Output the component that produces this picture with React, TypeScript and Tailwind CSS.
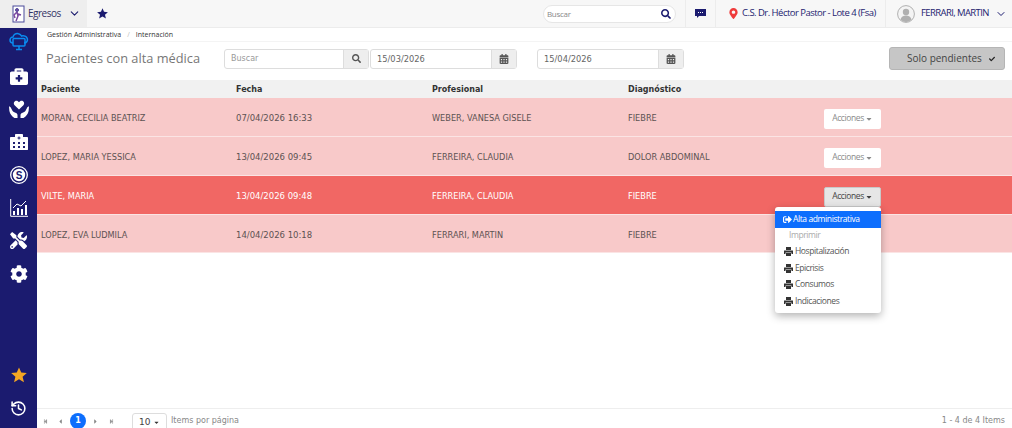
import React from "react";
import { ChevronDown, History } from "lucide-react";
import { FaCog, FaTools, FaBriefcaseMedical, FaHospitalAlt, FaCalendarAlt, FaSearch, FaMapMarkerAlt, FaCheck, FaSignOutAlt, FaCaretDown, FaStepBackward, FaStepForward, FaCaretLeft, FaCaretRight } from "react-icons/fa";

const navy = "#1b1b6f";
const rows = [
  ["MORAN, CECILIA BEATRIZ", "07/04/2026 16:33", "WEBER, VANESA GISELE", "FIEBRE"],
  ["LOPEZ, MARIA YESSICA", "13/04/2026 09:45", "FERREIRA, CLAUDIA", "DOLOR ABDOMINAL"],
  ["VILTE, MARIA", "13/04/2026 09:48", "FERREIRA, CLAUDIA", "FIEBRE"],
  ["LOPEZ, EVA LUDMILA", "14/04/2026 10:18", "FERRARI, MARTIN", "FIEBRE"],
];
const rowH = ["h-[39px]", "h-[39px]", "h-[39px]", "h-[38px]"];

function SharpStar({ size, color }: { size: number; color: string }) {
  return (
    <svg width={size} height={size} viewBox="0 0 20 20" fill={color}>
      <polygon points="10,0.500 12.800,7 19.800,7.500 14.500,12.100 16.200,19 10,15.300 3.800,19 5.500,12.100 0.200,7.500 7.200,7" />
    </svg>
  );
}
function PrinterSolid() {
  return (
    <svg width="9" height="9" viewBox="0 0 9 9" fill="#333333">
      <path d="M2 0h5v3H2z" />
      <path d="M0 3.500h9V7H7.500V5.500h-6V7H0z" />
      <path d="M2 6h5v3H2z" />
    </svg>
  );
}
function HandsHeart() {
  return (
    <svg width="20" height="18" viewBox="0 0 20 18" fill="#fff">
      <path d="M10 9.500 5.600 5.200C4 3.400 5.200.8 7.400.8c1.100 0 2 .6 2.600 1.500C10.600 1.400 11.500.8 12.600.8c2.200 0 3.400 2.600 1.800 4.400z" />
      <path d="M0 6.500c1 0 1.600.6 2 1.400l1.600 3c.9 1 2.500 1.500 3.600 2.200.8.5 1.300 1.200 1.300 2.200V18H5.500C3 16.500 1 14 .4 11z" />
      <path d="M20 6.500c-1 0-1.600.6-2 1.400l-1.600 3c-.9 1-2.500 1.500-3.600 2.200-.8.5-1.300 1.200-1.300 2.200V18h3c2.500-1.500 4.500-4 5.100-7z" />
    </svg>
  );
}
function Coin() {
  return (
    <svg width="18" height="18" viewBox="0 0 18 18">
      <circle cx="9" cy="9" r="8.300" fill="none" stroke="#fff" strokeWidth="1.300" />
      <circle cx="9" cy="9" r="6.200" fill="#fff" />
      <text x="9" y="12.600" textAnchor="middle" fontSize="10" fontWeight="700" fill={navy} fontFamily="'Liberation Sans',sans-serif">S</text>
    </svg>
  );
}
function Chart() {
  return (
    <svg width="18" height="18" viewBox="0 0 18 18" fill="none">
      <path d="M.7 0v17.300H18" stroke="#fff" strokeWidth="1" />
      <path d="M3 16v-4h2v4zM7 16V9h2v7zM11 16v-6h2v6zM15 16V6h2v10z" fill="#fff" />
      <path d="M3 9l4-4 4 2 5-5" stroke="#fff" strokeWidth="1" />
    </svg>
  );
}
function CloudMonitor() {
  return (
    <svg width="20" height="19" viewBox="0 0 20 19" fill="none" stroke="#0a8bf0" strokeWidth="1.500">
      <path d="M3 11H4C2 11 1 9.500 1 8s1.300-3 3-3c.4-2.500 3-4 5.500-3.200C11 2.200 12 3 12.500 4c2.500-.8 5 .5 5.800 2.500.6 2-.5 4.500-3.300 4.500" />
      <rect x="4" y="6.500" width="12" height="7.500" rx="1" />
      <path d="M10 14v3M7 17.500h6" />
    </svg>
  );
}
function Avatar() {
  return (
    <svg width="18" height="18" viewBox="0 0 18 18">
      <circle cx="9" cy="9" r="8.400" fill="#f4f4f4" stroke="#b0b0b0" strokeWidth="1" />
      <circle cx="9" cy="7" r="3.200" fill="#b0b0b0" />
      <path d="M3.500 14.500c.6-2.800 2.800-4 5.500-4s4.900 1.200 5.500 4c-1.400 1.500-3.300 2.500-5.500 2.500s-4.100-1-5.500-2.500z" fill="#b0b0b0" />
    </svg>
  );
}
function Sidebar() {
  const cls = "flex items-center justify-center";
  return (
    <aside className="w-[37px] shrink-0 flex flex-col items-center bg-[#1b1b6f]">
      <div className={`${cls} h-[19px] mt-[4px]`}><CloudMonitor /></div>
      <div className={`${cls} h-[19px] mt-[15px]`}><FaBriefcaseMedical size={18} color="#fff" /></div>
      <div className={`${cls} h-[18px] mt-[15px]`}><HandsHeart /></div>
      <div className={`${cls} h-[18px] mt-[15px]`}><FaHospitalAlt size={18} color="#fff" /></div>
      <div className={`${cls} h-[18px] mt-[15px]`}><Coin /></div>
      <div className={`${cls} h-[18px] mt-[15px]`}><Chart /></div>
      <div className={`${cls} h-[18px] mt-[14px]`}><FaTools size={17} color="#fff" /></div>
      <div className={`${cls} h-[18px] mt-[16px]`}><FaCog size={18} color="#fff" /></div>
      <div className="flex-1" />
      <div className={`${cls} h-[16px]`}><SharpStar size={16} color="#f5a623" /></div>
      <div className={`${cls} h-[16px] mt-[17px] mb-[12px]`}><History size={17} color="#fff" strokeWidth={2.2} /></div>
    </aside>
  );
}
function TopBar() {
  return (
    <header className="h-[28px] shrink-0 flex bg-[#f7f7f7] border-b border-[#ececec] font-['Open_Sans',sans-serif] text-[#23236f]">
      <div className="w-[87px] bg-[#eeeeee] flex items-center pl-[10px]">
        <svg width="15" height="18" viewBox="0 0 15 18" fill="none" stroke="#4a4a9a" strokeWidth="1"><rect x="3" y="1" width="11" height="16" fill="#fff" /><circle cx="7" cy="5" r="1.500" fill="#7a4aa0" /><path d="M7 7l-3 3 1 3M7 7l1 4-2 5M8 9l3 1" stroke="#7a4aa0" strokeWidth="1.500" /></svg>
        <span className="ml-[3px] text-[10px] tracking-[-0.5px] text-[#333366]">Egresos</span>
        <ChevronDown size={13} className="ml-[7px]" color="#1b1b6f" />
      </div>
      <div className="pl-[10px] flex items-center"><SharpStar size={11} color={navy} /></div>
      <div className="flex-1" />
      <div className="flex items-center pr-[9px] border-r border-[#ececec]">
        <div className="w-[133px] h-[18px] bg-white rounded-full border border-[#e6e6e6] flex items-center justify-between pl-[3px] pr-[4px]">
          <span className="text-[8px] tracking-[-0.3px] text-[#888888]">Buscar</span>
          <FaSearch size={10} color={navy} />
        </div>
      </div>
      <div className="w-[30px] flex items-center justify-center border-r border-[#ececec]"><svg width="11" height="9" viewBox="0 0 11 9"><path d="M0 0h11v7H4L2 9V7H0z" fill={navy} /><path d="M3 3.500h1M5 3.500h1M7 3.500h1" stroke="#fff" /></svg></div>
      <div className="w-[170px] flex items-center pl-[12px] border-r border-[#ececec]">
        <FaMapMarkerAlt size={11} color="#ef3b3b" />
        <span className="ml-[3px] text-[9.500px] tracking-[-0.53px] whitespace-nowrap">C.S. Dr. Héctor Pastor - Lote 4 (Fsa)</span>
      </div>
      <div className="w-[126px] flex items-center pl-[11px]">
        <Avatar />
        <span className="ml-[6px] text-[9.500px] tracking-[-0.6px] whitespace-nowrap">FERRARI, MARTIN</span>
        <ChevronDown size={12} className="ml-[6px]" color="#1b1b6f" />
      </div>
    </header>
  );
}
function DateBox({ value }: { value: string }) {
  return (
    <div className="w-[147px] h-[20px] flex border border-[#dddddd] rounded-[3px] bg-white">
      <span className="flex-1 pl-[6px] text-[8.300px] leading-[18px] text-[#666666]">{value}</span>
      <div className="w-[25px] bg-[#eeeeee] border-l border-[#dddddd] flex items-center justify-center"><FaCalendarAlt size={10} color="#555555" /></div>
    </div>
  );
}
function Menu() {
  const items = ["Hospitalización", "Epicrisis", "Consumos", "Indicaciones"];
  return (
    <div className="absolute left-[738px] top-[109px] w-[106px] h-[106px] bg-white rounded-[3px] shadow-[0_3px_8px_rgba(0,0,0,0.3)] pt-[4px] font-['Open_Sans',sans-serif] text-[8.500px] tracking-[-0.4px] text-[#555555] z-10">
      <div className="h-[17px] bg-[#0d6efd] text-white flex items-center pl-[8px] whitespace-nowrap"><FaSignOutAlt size={9} color="#fff" /><span className="ml-[1px]">Alta administrativa</span></div>
      <div className="h-[15px] flex items-center pl-[14px] text-[#aaaaaa]">Imprimir</div>
      {items.map((t) => (
        <div key={t} className="h-[16.500px] flex items-center pl-[9px] pt-[1px]"><PrinterSolid /><span className="ml-[2px]">{t}</span></div>
      ))}
    </div>
  );
}
export default function App() {
  return (
    <div className="w-[1012px] h-[428px] flex flex-col overflow-hidden bg-white font-['DejaVu_Sans',sans-serif]">
      <TopBar />
      <div className="flex-1 min-h-0 flex">
        <Sidebar />
        <main className="flex-1 min-w-0 flex flex-col">
          <div className="h-[13px] shrink-0 flex items-center pt-[2px] pl-[10px] text-[7px] text-[#333333] font-['Open_Sans',sans-serif]">
            <span>Gestión Administrativa</span><span className="mx-[6px] text-[#bbbbbb]">/</span><span>Internación</span>
          </div>
          <div className="h-[39px] shrink-0 flex items-center border-t border-[#f4f4f4] pb-[5px] pl-[9px] pr-[7px]">
            <h1 className="w-[178px] text-[12.800px] text-[#777777] font-['Open_Sans',sans-serif] whitespace-nowrap">Pacientes con alta médica</h1>
            <div className="w-[145px] h-[20px] flex border border-[#dddddd] rounded-[3px]">
              <span className="flex-1 pl-[6px] text-[8px] leading-[18px] text-[#999999]">Buscar</span>
              <div className="w-[25px] bg-[#eeeeee] border-l border-[#dddddd] flex items-center justify-center"><FaSearch size={9} color="#555555" /></div>
            </div>
            <div className="ml-[1px]"><DateBox value="15/03/2026" /></div>
            <div className="ml-[20px]"><DateBox value="15/04/2026" /></div>
            <div className="flex-1" />
            <div className="w-[116px] h-[23px] bg-[#c6c6c6] border border-[#b5b5b5] rounded-[3px] flex items-center pl-[17px] text-[10px] text-[#444444] font-['Open_Sans',sans-serif]">
              <span className="flex-1">Solo pendientes</span><FaCheck size={6} color="#222222" className="mr-[9px]" />
            </div>
          </div>
          <div className="h-[18px] shrink-0 flex items-center pt-[2px] bg-[#f1f1f1] text-[8px] font-bold text-[#333333]">
            <div className="w-[199px] pl-[4px]">Paciente</div>
            <div className="w-[196px]">Fecha</div>
            <div className="w-[196px]">Profesional</div>
            <div>Diagnóstico</div>
          </div>
          <div className="relative flex-1 min-h-0">
            {rows.map((r, i) => {
              const sel = i === 2;
              return (
                <div key={r[0]} className={`${rowH[i]} flex items-center pt-[3px] text-[8.200px] border-b border-[#fbe4e4] ${sel ? "bg-[#f16764] text-white" : "bg-[#f8c9c9] text-[#5c5252]"}`}>
                  <div className="w-[199px] pl-[4px] whitespace-nowrap">{r[0]}</div>
                  <div className="w-[196px] text-[8.500px]">{r[1]}</div>
                  <div className="w-[196px] whitespace-nowrap">{r[2]}</div>
                  <div className="w-[196px] whitespace-nowrap">{r[3]}</div>
                  {i !== 3 && (
                    <div className={`w-[57px] h-[20px] rounded-[2px] flex items-center justify-center font-['Open_Sans',sans-serif] text-[8.500px] tracking-[-0.4px] ${sel ? "bg-[#e6e6e6] text-[#444444] border border-[#c9c9c9]" : "bg-white text-[#8a8a8a]"}`}>
                      Acciones<FaCaretDown size={8} className="ml-[1px]" />
                    </div>
                  )}
                </div>
              );
            })}
            <Menu />
          </div>
          <footer className="h-[20px] shrink-0 border-t border-[#eeeeee] flex items-center pt-[5px] text-[8px] text-[#888888]">
            <FaStepBackward size={5} className="ml-[6px]" color="#999999" />
            <FaCaretLeft size={7} className="ml-[9px]" color="#888888" />
            <div className="ml-[6px] w-[16px] h-[16px] rounded-full bg-[#0d6efd] text-white flex items-center justify-center text-[8px] font-bold">1</div>
            <FaCaretRight size={7} className="ml-[6px]" color="#888888" />
            <FaStepForward size={5} className="ml-[10px]" color="#999999" />
            <div className="ml-[18px] w-[35px] h-[20px] mt-[3px] border border-[#dddddd] rounded-t-[3px] flex items-center justify-between px-[6px] text-[#444444] text-[9px]">10<FaCaretDown size={7} color="#333333" /></div>
            <span className="ml-[4px]">Items por página</span>
            <div className="flex-1" />
            <span className="mr-[7px]">1 - 4 de 4 Items</span>
          </footer>
        </main>
      </div>
    </div>
  );
}
